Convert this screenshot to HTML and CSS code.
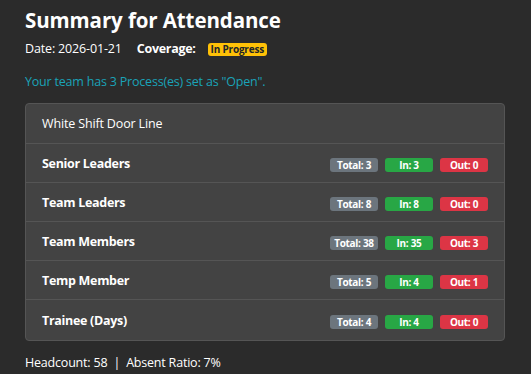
FILE: index.html
```html
<!DOCTYPE html>
<html>
<head>
<meta charset="utf-8">
<link rel="stylesheet" href="styles.css">
</head>
<body>
<div class="page">
  <h1 class="title">Summary for Attendance</h1>
  <div class="meta">
    <span class="date">Date: 2026-01-21</span>
    <span class="cov-label">Coverage:</span>
    <span class="status">In Progress</span>
  </div>
  <p class="notice">Your team has 3 Process(es) set as "Open".</p>
  <div class="card">
    <div class="card-head">White Shift Door Line</div>
    <div class="row">
      <span class="label">Senior Leaders</span>
      <span class="badges"><span class="badge total">Total: 3</span><span class="badge in">In: 3</span><span class="badge out">Out: 0</span></span>
    </div>
    <div class="row">
      <span class="label">Team Leaders</span>
      <span class="badges"><span class="badge total">Total: 8</span><span class="badge in">In: 8</span><span class="badge out">Out: 0</span></span>
    </div>
    <div class="row">
      <span class="label">Team Members</span>
      <span class="badges"><span class="badge total">Total: 38</span><span class="badge in">In: 35</span><span class="badge out">Out: 3</span></span>
    </div>
    <div class="row">
      <span class="label">Temp Member</span>
      <span class="badges"><span class="badge total">Total: 5</span><span class="badge in">In: 4</span><span class="badge out">Out: 1</span></span>
    </div>
    <div class="row">
      <span class="label">Trainee (Days)</span>
      <span class="badges"><span class="badge total">Total: 4</span><span class="badge in">In: 4</span><span class="badge out">Out: 0</span></span>
    </div>
  </div>
  <p class="footer">Headcount: 58 <span class="sep">|</span> Absent Ratio: 7%</p>
</div>
</body>
</html>
```

FILE: styles.css
```css
html, body {
  margin: 0;
  padding: 0;
  background: #2b2b2b;
}
body {
  font-family: "Open Sans", "Noto Sans", sans-serif;
  color: #ffffff;
  letter-spacing: -0.15px;
}
.page {
  padding: 5px 26px 0 25px;
}
.title {
  margin: 0;
  font-size: 20.5px;
  font-weight: 700;
  line-height: 30px;
  letter-spacing: -0.1px;
}
.meta {
  display: flex;
  align-items: center;
  margin-top: 5px;
  font-size: 12.5px;
  line-height: 18px;
}
.date {
  margin-right: 15px;
}
.cov-label {
  font-weight: 700;
  letter-spacing: -0.3px;
  margin-right: 12px;
}
.status {
  background: #ffc107;
  color: #212529;
  font-size: 10px;
  font-weight: 700;
  letter-spacing: -0.2px;
  border-radius: 3px;
  padding: 0 3px;
  line-height: 13px;
}
.notice {
  margin: 15px 0 0;
  font-size: 12.5px;
  line-height: 18px;
  color: #1aa3b8;
  letter-spacing: -0.2px;
}
.card {
  margin-top: 12px;
  background: #434343;
  border: 1px solid #555555;
  border-radius: 4px;
}
.card-head {
  height: 39px;
  display: flex;
  align-items: center;
  padding: 0 16px;
  font-size: 12.5px;
  border-bottom: 1px solid #555555;
}
.row {
  height: 38px;
  display: flex;
  align-items: center;
  justify-content: space-between;
  padding: 0 16px;
  border-bottom: 1px solid #555555;
}
.row:last-child {
  border-bottom: none;
  height: 40px;
}
.label {
  font-size: 12.5px;
  font-weight: 700;
  letter-spacing: -0.3px;
}
.badges {
  display: flex;
  gap: 7px;
  padding-top: 3px;
}
.badge {
  width: 48px;
  height: 14px;
  line-height: 14px;
  text-align: center;
  font-size: 10px;
  font-weight: 700;
  letter-spacing: -0.3px;
  border-radius: 3px;
  color: #ffffff;
}
.total { background: #6c757d; }
.in { background: #28a745; }
.out { background: #dc3545; }
.footer {
  margin: 13px 0 0;
  font-size: 12.5px;
  line-height: 18px;
  letter-spacing: -0.2px;
}
.sep {
  margin: 0 3px;
}
```
